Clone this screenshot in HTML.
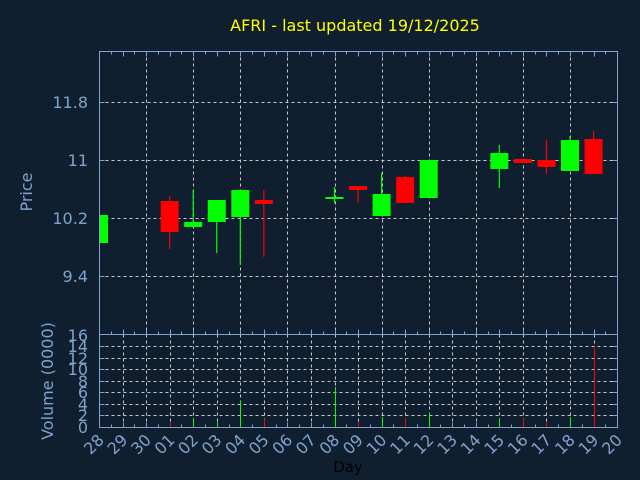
<!DOCTYPE html>
<html><head><meta charset="utf-8"><style>
html,body{margin:0;padding:0;background:#0f1f30;}
svg{display:block;font-family:"DejaVu Sans","Liberation Sans",sans-serif;}
</style></head><body>
<svg id="s" width="640" height="480" viewBox="0 0 640 480" xmlns="http://www.w3.org/2000/svg">
<rect width="640" height="480" fill="#0f1f30"/>
<text x="355" y="31" fill="#ffff00" font-size="16" text-anchor="middle">AFRI - last updated 19/12/2025</text>
<g id="g"></g>
<text x="32" y="192" fill="#7fa3cc" font-size="16" text-anchor="middle" transform="rotate(-90 32 192)">Price</text>
<text x="53" y="381" fill="#7fa3cc" font-size="16" text-anchor="middle" transform="rotate(-90 53 381)">Volume (0000)</text>
<text x="348" y="472" fill="#000" font-size="15" text-anchor="middle">Day</text>
</svg>
<script>
var g=document.getElementById('g'),h='';
var L=99.5,R=617.5,T=51.5,M=334.5,B=427.5,dx=23.55;
function X(i){return 99+i*dx;}
[102,160,218,276].forEach(function(y){h+='<line x1="'+L+'" x2="'+R+'" y1="'+(y+.5)+'" y2="'+(y+.5)+'" stroke="#c8c8c8" stroke-dasharray="3,3"/>';});
for(var i=2;i<22;i+=2){var x=Math.round(X(i))+.5;h+='<line x1="'+x+'" x2="'+x+'" y1="'+T+'" y2="'+M+'" stroke="#c8c8c8" stroke-dasharray="3,3"/>';}
[346,358,369,381,392,404,415].forEach(function(y){h+='<line x1="'+L+'" x2="'+R+'" y1="'+(y+.5)+'" y2="'+(y+.5)+'" stroke="#c8c8c8" stroke-dasharray="3,3"/>';});
for(var i=1;i<22;i++){var x=Math.round(X(i))+.5;h+='<line x1="'+x+'" x2="'+x+'" y1="'+M+'" y2="'+B+'" stroke="#c8c8c8" stroke-dasharray="3,3"/>';}
h+='<rect x="'+L+'" y="'+T+'" width="'+(R-L)+'" height="'+(B-T)+'" fill="none" stroke="#7fa3cc"/>';
h+='<line x1="'+L+'" x2="'+R+'" y1="'+M+'" y2="'+M+'" stroke="#7fa3cc"/>';
for(var k=0;k<=44;k++){var x=Math.round(99+k*dx/2)+.5,len=(k%2==0)?5:3;
 h+='<line x1="'+x+'" x2="'+x+'" y1="'+T+'" y2="'+(T+len)+'" stroke="#7fa3cc"/>';
 h+='<line x1="'+x+'" x2="'+x+'" y1="'+M+'" y2="'+(M-len)+'" stroke="#7fa3cc"/>';
 h+='<line x1="'+x+'" x2="'+x+'" y1="'+B+'" y2="'+(B-len)+'" stroke="#7fa3cc"/>';}
[102,160,218,276].forEach(function(y){h+='<line x1="'+L+'" x2="'+(L+5)+'" y1="'+(y+.5)+'" y2="'+(y+.5)+'" stroke="#7fa3cc"/><line x1="'+(R-5)+'" x2="'+R+'" y1="'+(y+.5)+'" y2="'+(y+.5)+'" stroke="#7fa3cc"/>';});
[346,358,369,381,392,404,415].forEach(function(y){h+='<line x1="'+L+'" x2="'+(L+5)+'" y1="'+(y+.5)+'" y2="'+(y+.5)+'" stroke="#7fa3cc"/><line x1="'+(R-5)+'" x2="'+R+'" y1="'+(y+.5)+'" y2="'+(y+.5)+'" stroke="#7fa3cc"/>';});
[['11.8',102],['11',160],['10.2',218],['9.4',276]].forEach(function(a){h+='<text x="88" y="'+(a[1]+6)+'" fill="#7fa3cc" font-size="16" text-anchor="end">'+a[0]+'</text>';});
[['16',335],['14',346],['12',358],['10',369],['8',381],['6',392],['4',404],['2',415],['0',427]].forEach(function(a){h+='<text x="88" y="'+(a[1]+6)+'" fill="#7fa3cc" font-size="16" text-anchor="end">'+a[0]+'</text>';});
var days=['28','29','30','01','02','03','04','05','06','07','08','09','10','11','12','13','14','15','16','17','18','19','20'];
days.forEach(function(d,i){var x=X(i)+6,y=441;h+='<text x="'+x+'" y="'+y+'" fill="#7fa3cc" font-size="16" text-anchor="end" transform="rotate(-45 '+x+' '+y+')">'+d+'</text>';});
var G='#00ff00',Rd='#ff0000';
var c=[[0,G,215,243,215,243],[3,Rd,201,232,196,249],[4,G,222,227,190,227],[5,G,200,222,200,253],[6,G,190,217,190,265],[7,Rd,200,204,190,257],
[10,G,197,199,187,203],[11,Rd,186,190,186,203],[12,G,194,216,173,216],[13,Rd,177,203,176,203],[14,G,160,198,160,198],
[17,G,153,169,145,188],[18,Rd,159,163,159,163],[19,Rd,160,167,140,174],[20,G,140,171,136,171],[21,Rd,139,174,131,174]];
h+='<clipPath id="cp"><rect x="100" y="52" width="517" height="282"/></clipPath><g clip-path="url(#cp)">';
c.forEach(function(a){var x=X(a[0]);h+='<line x1="'+x+'" x2="'+x+'" y1="'+a[4]+'" y2="'+a[5]+'" stroke="'+a[1]+'" stroke-width="1.2"/>';
 var hgt=Math.max(a[3]-a[2],2);h+='<rect x="'+(x-9)+'" y="'+a[2]+'" width="18" height="'+hgt+'" fill="'+a[1]+'"/>';});
h+='</g>';
var v=[[3,Rd,423],[4,G,418],[5,G,422],[6,G,401],[7,Rd,419],[10,G,387],[11,Rd,422],[12,G,417],[13,Rd,418],[14,G,413],[17,G,418],[18,Rd,419],[19,Rd,422],[20,G,417],[21,Rd,345]];
v.forEach(function(a){var x=Math.round(X(a[0]))+.5;h+='<line x1="'+x+'" x2="'+x+'" y1="'+a[2]+'" y2="427" stroke="'+a[1]+'"/>';});
g.innerHTML=h;
</script>
</body></html>
